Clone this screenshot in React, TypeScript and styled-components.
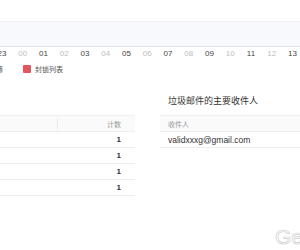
import React from "react";
import styled, { createGlobalStyle } from "styled-components";

const GlobalStyle = createGlobalStyle`
  html, body {
    margin: 0;
    padding: 0;
  }
  body {
    width: 300px;
    height: 250px;
    overflow: hidden;
    background: #fff;
    font-family: "Liberation Sans", "Noto Sans CJK SC", sans-serif;
    color: #333;
  }
`;

const Page = styled.div`
  position: relative;
  width: 300px;
  height: 250px;
  overflow: hidden;
`;

const Plot = styled.div`
  margin-top: 21px;
  height: 24px;
  background: #f7f9fc;
  border-top: 1px solid #eef0f4;
  border-bottom: 1px solid #e2e5ea;
`;

const Axis = styled.div`
  display: grid;
  grid-template-columns: repeat(15, 20.75px);
  margin-left: -8.4px;
  margin-top: 2px;
  height: 10px;
`;

const Tick = styled.span<{ $strong: boolean }>`
  text-align: center;
  font-size: 8px;
  line-height: 10px;
  color: ${(p) => (p.$strong ? "#444" : "#bdbdbd")};
`;

const Legend = styled.div`
  display: flex;
  align-items: center;
  gap: 20px;
  margin-left: -30px;
  margin-top: 5px;
  height: 10px;
`;

const LegendItem = styled.div`
  display: flex;
  align-items: center;
  gap: 4px;
  font-size: 7px;
  color: #555;
`;

const Swatch = styled.span<{ $color: string }>`
  width: 8px;
  height: 8px;
  border-radius: 1px;
  background: ${(p) => p.$color};
`;

const Columns = styled.div`
  display: grid;
  grid-template-columns: 255px 255px;
  column-gap: 25px;
  margin-left: -120px;
  margin-top: 21px;
`;

const Panel = styled.section`
  display: flex;
  flex-direction: column;
`;

const Title = styled.h3`
  margin: 0 0 8px;
  padding-left: 8px;
  height: 12px;
  font-size: 9px;
  line-height: 12px;
  font-weight: 400;
  color: #333;
  white-space: nowrap;
`;

const Table = styled.table`
  width: 100%;
  border-collapse: collapse;
  table-layout: fixed;
`;

const Th = styled.th<{ $align?: string; $divider?: boolean }>`
  position: relative;
  height: 15px;
  padding: 0 ${(p) => (p.$align === "right" ? "14px" : "8px")};
  background: #fafafa;
  border-top: 1px solid #f0f0f0;
  border-bottom: 1px solid #eeeeee;
  font-size: 7px;
  font-weight: 400;
  color: #999;
  text-align: ${(p) => p.$align || "left"};

  &::before {
    content: "";
    display: ${(p) => (p.$divider ? "block" : "none")};
    position: absolute;
    left: 0;
    top: 50%;
    width: 1px;
    height: 11px;
    transform: translateY(-50%);
    background: #ececec;
  }
`;

const Td = styled.td<{ $align?: string; $strong?: boolean }>`
  height: 15px;
  padding: 0 ${(p) => (p.$align === "right" ? "14px" : "8px")};
  border-bottom: 1px solid #eeeeee;
  font-size: ${(p) => (p.$strong ? "8px" : "8.5px")};
  font-weight: ${(p) => (p.$strong ? 700 : 400)};
  color: #333;
  text-align: ${(p) => p.$align || "left"};
  white-space: nowrap;
`;

const Watermark = styled.div`
  position: absolute;
  left: 275px;
  top: 225px;
  font-family: "Liberation Sans", sans-serif;
  font-size: 21px;
  line-height: 24px;
  color: #fff;
  -webkit-text-stroke: 0.7px #cfcfcf;
  white-space: nowrap;
`;

const hours = ["23", "00", "01", "02", "03", "04", "05", "06", "07", "08", "09", "10", "11", "12", "13"];

const senders = ["", "", "", ""];

export default function App() {
  return (
    <>
      <GlobalStyle />
      <Page>
        <Plot />
        <Axis>
          {hours.map((h) => (
            <Tick key={h} $strong={parseInt(h, 10) % 2 === 1}>
              {h}
            </Tick>
          ))}
        </Axis>
        <Legend>
          <LegendItem>
            <Swatch $color="#6c8fd8" />
            地址簿
          </LegendItem>
          <LegendItem>
            <Swatch $color="#e1575d" />
            封锁列表
          </LegendItem>
        </Legend>
        <Columns>
          <Panel>
            <Title />
            <Table>
              <colgroup>
                <col style={{ width: 177 }} />
                <col style={{ width: 78 }} />
              </colgroup>
              <thead>
                <tr>
                  <Th />
                  <Th $align="right" $divider>
                    计数
                  </Th>
                </tr>
              </thead>
              <tbody>
                {senders.map((s, i) => (
                  <tr key={i}>
                    <Td>{s}</Td>
                    <Td $align="right" $strong>
                      1
                    </Td>
                  </tr>
                ))}
              </tbody>
            </Table>
          </Panel>
          <Panel>
            <Title>垃圾邮件的主要收件人</Title>
            <Table>
              <thead>
                <tr>
                  <Th>收件人</Th>
                </tr>
              </thead>
              <tbody>
                <tr>
                  <Td>validxxxg@gmail.com</Td>
                </tr>
              </tbody>
            </Table>
          </Panel>
        </Columns>
        <Watermark>Geek</Watermark>
      </Page>
    </>
  );
}
